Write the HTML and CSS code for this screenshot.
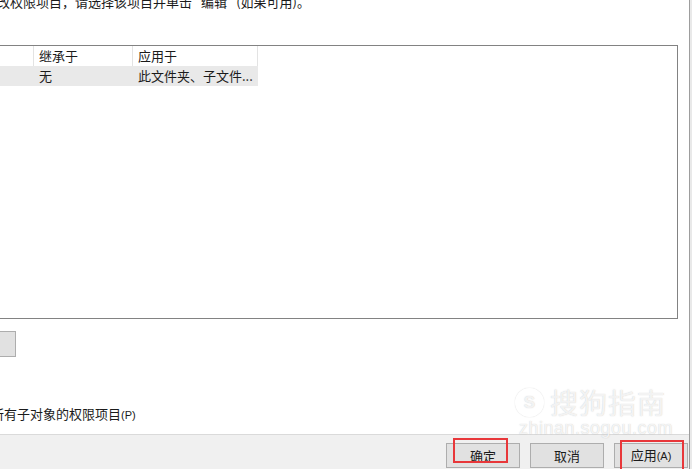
FILE: index.html
```html
<!DOCTYPE html>
<html lang="zh-CN">
<head>
<meta charset="utf-8">
<title>高级安全设置</title>
<link rel="stylesheet" href="styles.css">
</head>
<body>
<div class="frame">
  <div class="dialog">
    <div class="content">
      <p class="intro">改权限项目，请选择该项目并单击 "编辑" (如果可用)。</p>
      <div class="list">
        <div class="list-row list-head">
          <div class="cell cell-a"></div>
          <div class="cell cell-b">继承于</div>
          <div class="cell cell-c">应用于</div>
        </div>
        <div class="list-row list-item">
          <div class="cell cell-a"></div>
          <div class="cell cell-b">无</div>
          <div class="cell cell-c">此文件夹、子文件...</div>
        </div>
      </div>
      <div class="btn-partial"></div>
      <p class="check">所有子对象的权限项目<span class="latin">(P)</span></p>
    </div>
    <div class="footer">
      <button class="btn">确定<span class="mark mark-ok"></span></button>
      <button class="btn">取消</button>
      <button class="btn">应用<span class="latin">(A)</span><span class="mark mark-apply"></span></button>
    </div>
  </div>
  <div class="edge"></div>
</div>
<div class="watermark">
  <div class="wm-top"><span class="wm-logo">S</span><span class="wm-name">搜狗指南</span></div>
  <div class="wm-url">zhinan.sogou.com</div>
</div>
</body>
</html>
```

FILE: styles.css
```css
html, body {
  margin: 0;
  padding: 0;
  background: #ffffff;
}
body {
  width: 692px;
  height: 469px;
  overflow: hidden;
  position: relative;
  font-family: "Noto Sans CJK SC", "Noto Sans", sans-serif;
  font-size: 13px;
  color: #1b1b1b;
}
.frame {
  display: flex;
  height: 469px;
}
.dialog {
  width: 689px;
  display: flex;
  flex-direction: column;
  overflow: hidden;
}
.edge {
  width: 2px;
  border-left: 1px solid #9d9d9d;
  background: #e9e9e9;
}
.content {
  height: 434px;
  background: #ffffff;
  overflow: hidden;
}
.intro {
  margin: -7px 0 0 -3px;
  line-height: 17px;
  white-space: nowrap;
}
.list {
  margin-top: 35px;
  margin-right: 11px;
  height: 272px;
  border-top: 1px solid #828282;
  border-right: 1px solid #828282;
  border-bottom: 1px solid #828282;
  box-sizing: content-box;
}
.list-row {
  display: flex;
  width: 258px;
}
.list-head {
  height: 20px;
  line-height: 20px;
}
.list-head .cell {
  border-right: 1px solid #e3e3e3;
}
.list-item {
  height: 20px;
  line-height: 19px;
  background: #e9e9e9;
}
.cell {
  box-sizing: border-box;
  padding-left: 5px;
  white-space: nowrap;
}
.cell-a { width: 34px; }
.cell-b { width: 99px; }
.cell-c { width: 125px; }
.btn-partial {
  margin-top: 12px;
  margin-left: -85px;
  width: 99px;
  height: 24px;
  background: #e1e1e1;
  border: 1px solid #adadad;
}
.check {
  margin: 48px 0 0 -9px;
  line-height: 17px;
  white-space: nowrap;
}
.latin {
  font-family: "Liberation Sans", "Noto Sans", sans-serif;
  font-size: 11px;
}
.footer {
  flex: 1;
  background: #f0f0f0;
  border-top: 1px solid #dadada;
  display: flex;
  justify-content: flex-end;
  align-items: flex-start;
  gap: 10px;
  padding: 8px 1px 0 0;
}
.btn {
  position: relative;
  width: 74px;
  height: 25px;
  margin: 0;
  padding: 0;
  background: #e1e1e1;
  border: 1px solid #adadad;
  font-family: "Noto Sans CJK SC", "Noto Sans", sans-serif;
  font-size: 13px;
  color: #1b1b1b;
  line-height: 22px;
}
.mark {
  position: absolute;
  border: 2px solid #e8373a;
  box-sizing: border-box;
}
.mark-ok {
  left: 6px;
  top: -6px;
  width: 55px;
  height: 25px;
}
.mark-apply {
  left: 5px;
  top: -4px;
  width: 64px;
  height: 31px;
}
.watermark {
  position: absolute;
  left: 515px;
  top: 383px;
  color: rgba(255, 255, 255, 0.8);
  text-shadow: 0 0 1px rgba(140, 140, 140, 0.5);
  pointer-events: none;
}
.wm-top {
  display: flex;
  align-items: center;
  gap: 6px;
}
.wm-logo {
  width: 29px;
  height: 29px;
  border-radius: 50%;
  border: 3px solid rgba(255, 255, 255, 0.8);
  box-shadow: 0 0 1px rgba(140, 140, 140, 0.5);
  box-sizing: border-box;
  font-family: "Liberation Sans", sans-serif;
  font-weight: bold;
  font-size: 17px;
  line-height: 23px;
  text-align: center;
}
.wm-name {
  font-size: 28px;
  line-height: 38px;
  letter-spacing: 1px;
}
.wm-url {
  font-family: "Liberation Sans", sans-serif;
  font-size: 18px;
  line-height: 14px;
  letter-spacing: 0.5px;
  margin-left: 4px;
}
```
